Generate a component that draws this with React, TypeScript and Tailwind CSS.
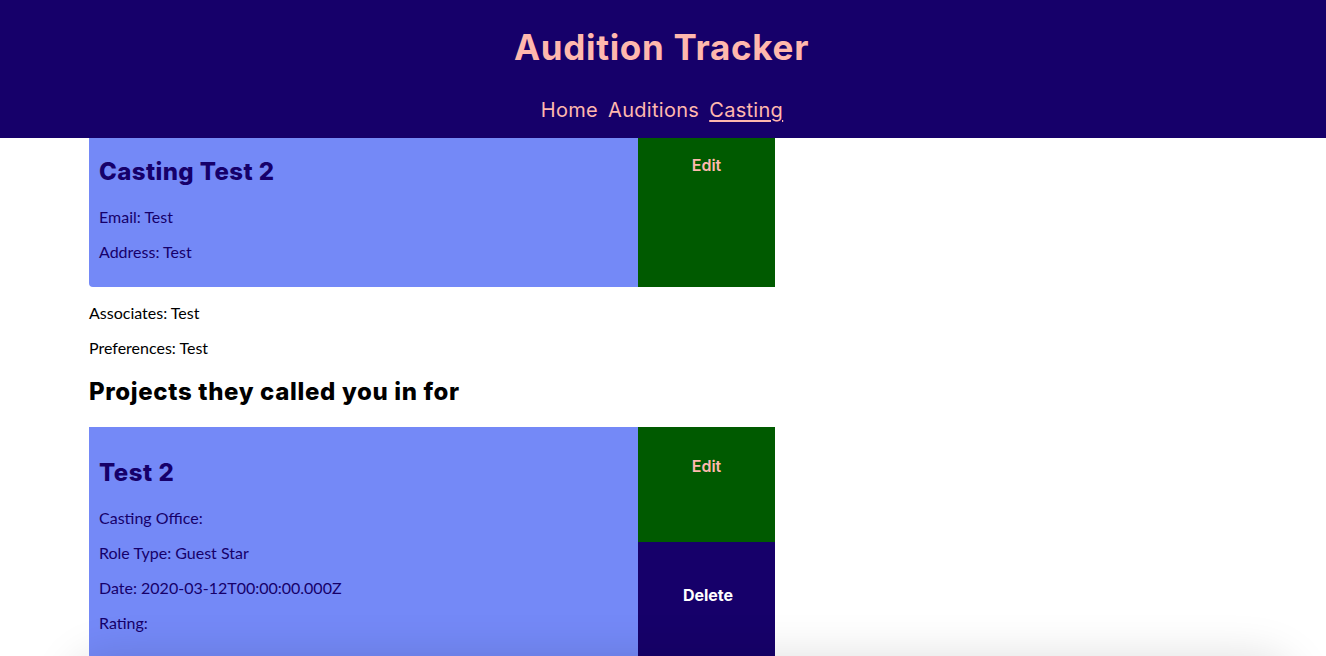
type Field = { label: string; value: string };

const heading = "font-['Inter',sans-serif]";
const body = "font-['Lato',sans-serif]";

function Header() {
  return (
    <header className="bg-[#16006a] h-[138px] flex flex-col items-center">
      <h1 className={`${heading} text-[35px] leading-[40px] font-bold text-[#ffb8ae] mt-[27px] tracking-[0.7px] -ml-[3px]`}>
        Audition Tracker
      </h1>
      <nav className={`${heading} flex gap-[10px] text-[20px] leading-[24px] text-[#ffb8ae] mt-[31px] tracking-[0.3px] -ml-[2px]`}>
        <a>Home</a>
        <a>Auditions</a>
        <a className="underline underline-offset-[3px]">Casting</a>
      </nav>
    </header>
  );
}

function Lines({ fields }: { fields: Field[] }) {
  return (
    <div className="flex flex-col gap-[16px]">
      {fields.map((f, i) => (
        <p key={i} className={`${body} text-[16px] leading-[19px]`}>
          {f.label}: {f.value}
        </p>
      ))}
    </div>
  );
}

export default function App() {
  return (
    <div className="min-h-[656px] bg-white relative">
      <Header />
      <main className="ml-[89px] w-[686px]">
        {/* Casting office card */}
        <div className="flex bg-[#7489f7] rounded-bl-[4px] text-[#16006a] h-[149px]">
          <div className="flex-1 pl-[10px] pt-[20px]">
            <h2 className={`${heading} text-[24px] leading-[28px] font-extrabold mb-[21px] tracking-[0.4px]`}>Casting Test 2</h2>
            <Lines fields={[{ label: "Email", value: "Test" }, { label: "Address", value: "Test" }]} />
          </div>
          <div className="w-[137px] bg-[#005a00] flex justify-center pt-[17px]">
            <button className={`${heading} text-[16px] leading-[20px] font-semibold text-[#ffb8ae] h-[20px]`}>Edit</button>
          </div>
        </div>

        <div className="mt-[16px] text-black">
          <Lines fields={[{ label: "Associates", value: "Test" }, { label: "Preferences", value: "Test" }]} />
        </div>

        <h2 className={`${heading} text-[24px] leading-[28px] font-extrabold text-black mt-[21px] mb-[21px] tracking-[0.65px]`}>
          Projects they called you in for
        </h2>

        {/* Project card */}
        <div className="flex bg-[#7489f7] rounded-bl-[4px] text-[#16006a]">
          <div className="flex-1 pl-[10px] pt-[32px] pb-[27px]">
            <h2 className={`${heading} text-[24px] leading-[28px] font-extrabold mb-[21px] tracking-[0.5px]`}>Test 2</h2>
            <Lines
              fields={[
                { label: "Casting Office", value: "" },
                { label: "Role Type", value: "Guest Star" },
                { label: "Date", value: "2020-03-12T00:00:00.000Z" },
                { label: "Rating", value: "" },
              ]}
            />
          </div>
          <div className="w-[137px] flex flex-col">
            <div className="h-[115px] bg-[#005a00] flex justify-center pt-[29px]">
              <button className={`${heading} text-[16px] leading-[20px] font-semibold text-[#ffb8ae] h-[20px]`}>Edit</button>
            </div>
            <div className="flex-1 bg-[#16006a] flex justify-center pt-[43px]">
              <button className={`${heading} text-[16px] leading-[20px] font-bold text-white h-[20px] pl-[3px]`}>Delete</button>
            </div>
          </div>
        </div>
      </main>
      <div className="fixed left-[70px] right-[30px] top-[656px] h-[80px] rounded-[40px] shadow-[0_0_45px_rgba(0,0,0,0.13)]" />
    </div>
  );
}
